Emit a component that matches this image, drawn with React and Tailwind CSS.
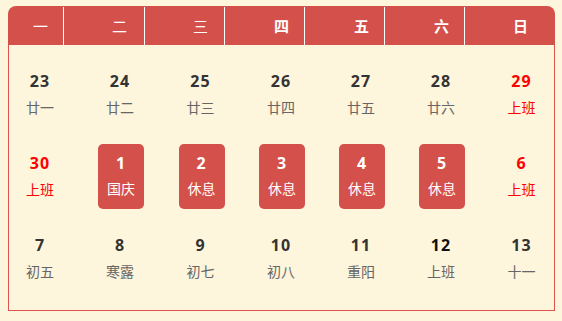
import React from 'react';

const font = { fontFamily: '"Noto Sans", "Noto Sans CJK SC", sans-serif' };

const heads = [
    { t: '一', w: 'w-[56px] pl-[25px]', bold: false },
    { t: '二', w: 'w-[81px] pl-[48px]', bold: false },
    { t: '三', w: 'w-[80px] pl-[48px]', bold: false },
    { t: '四', w: 'w-[80px] pl-[49px]', bold: true },
    { t: '五', w: 'w-[80px] pl-[49px]', bold: true },
    { t: '六', w: 'w-[80px] pl-[49px]', bold: true },
    { t: '日', w: 'flex-1 pl-[48px]', bold: true },
];

// kind: n = normal, r = red text, h = holiday box, k = darker number
const rows = [
    [
        { d: '23', l: '廿一' }, { d: '24', l: '廿二' }, { d: '25', l: '廿三' }, { d: '26', l: '廿四' },
        { d: '27', l: '廿五' }, { d: '28', l: '廿六' }, { d: '29', l: '上班', kind: 'r' },
    ],
    [
        { d: '30', l: '上班', kind: 'r' }, { d: '1', l: '国庆', kind: 'h' }, { d: '2', l: '休息', kind: 'h' },
        { d: '3', l: '休息', kind: 'h' }, { d: '4', l: '休息', kind: 'h' }, { d: '5', l: '休息', kind: 'h' },
        { d: '6', l: '上班', kind: 'r' },
    ],
    [
        { d: '7', l: '初五' }, { d: '8', l: '寒露' }, { d: '9', l: '初七' }, { d: '10', l: '初八' },
        { d: '11', l: '重阳' }, { d: '12', l: '上班', kind: 'k' }, { d: '13', l: '十一' },
    ],
];

const colPad = ['pr-[9px]', '', '', '', '', '', 'pl-[8px]'];

const Day = ({ item }) => {
    if (item.kind === 'h') {
        return (
            <div className="w-[46px] h-[65px] rounded-[5px] bg-[#d4504a] flex flex-col items-center justify-center text-white ml-[2px]">
                <span className="text-[16px] font-bold leading-[20px] tracking-[1px]">{item.d}</span>
                <span className="text-[14px] leading-[20px] mt-[6px]">{item.l}</span>
            </div>
        );
    }
    const numColor = item.kind === 'r' ? 'text-[#ff0000]' : item.kind === 'k' ? 'text-[#111111]' : 'text-[#333333]';
    const lblColor = item.kind === 'r' ? 'text-[#ff0000]' : 'text-[#666666]';
    return (
        <div className="flex flex-col items-center">
            <span className={`text-[16px] font-bold leading-[20px] tracking-[1px] ${numColor}`}>{item.d}</span>
            <span className={`text-[14px] leading-[20px] mt-[7px] ${lblColor}`}>{item.l}</span>
        </div>
    );
};

export default function App() {
    return (
        <div className="w-[562px] h-[321px] bg-[#fdf5dc] pt-[6px] px-[8px]" style={font}>
            <div className="w-[547px]">
                {/* week header */}
                <div className="flex h-[39px] bg-[#d4504a] rounded-t-[8px] text-white text-[15px]">
                    {heads.map((h, i) => (
                        <div
                            key={h.t}
                            className={`${h.w} flex items-center mt-[1px] ${i < 6 ? 'border-r border-white' : ''} ${h.bold ? 'font-bold' : 'font-normal'}`}
                        >
                            {h.t}
                        </div>
                    ))}
                </div>

                {/* days */}
                <div className="h-[266px] border-x border-b border-[#e0524c] pt-[8px]">
                    {rows.map((row, r) => (
                        <div key={r} className="grid grid-cols-[71px_80px_81px_80px_80px_80px_1fr] h-[82px]">
                            {row.map((item, c) => (
                                <div key={item.d} className={`flex items-center justify-center ${colPad[c]}`}>
                                    <Day item={item} />
                                </div>
                            ))}
                        </div>
                    ))}
                </div>
            </div>
        </div>
    );
}
